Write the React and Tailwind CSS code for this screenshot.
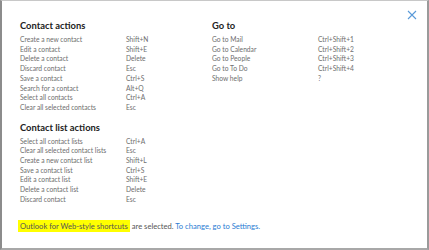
const contactActions = [
  ['Create a new contact', 'Shift+N'],
  ['Edit a contact', 'Shift+E'],
  ['Delete a contact', 'Delete'],
  ['Discard contact', 'Esc'],
  ['Save a contact', 'Ctrl+S'],
  ['Search for a contact', 'Alt+Q'],
  ['Select all contacts', 'Ctrl+A'],
  ['Clear all selected contacts', 'Esc'],
];

const goTo = [
  ['Go to Mail', 'Ctrl+Shift+1'],
  ['Go to Calendar', 'Ctrl+Shift+2'],
  ['Go to People', 'Ctrl+Shift+3'],
  ['Go to To Do', 'Ctrl+Shift+4'],
  ['Show help', '?'],
];

const listActions = [
  ['Select all contact lists', 'Ctrl+A'],
  ['Clear all selected contact lists', 'Esc'],
  ['Create a new contact list', 'Shift+L'],
  ['Save a contact list', 'Ctrl+S'],
  ['Edit a contact list', 'Shift+E'],
  ['Delete a contact list', 'Delete'],
  ['Discard contact', 'Esc'],
];

function Section({ title, rows, className = '' }) {
  return (
    <div className={className}>
      <h2 className="text-[9.4px] leading-[14px] font-bold text-[#222]">{title}</h2>
      <div className="mt-[2px]">
        {rows.map(([label, keys]) => (
          <div key={label} className="flex text-[6.7px] leading-[9.7px] text-[#6e6e6e]">
            <span className="w-[106px] shrink-0 whitespace-nowrap">{label}</span>
            <span className="whitespace-nowrap">{keys}</span>
          </div>
        ))}
      </div>
    </div>
  );
}

export default function App() {
  return (
    <div
      className="relative w-[429px] h-[250px] bg-white border-t border-t-[#c8c8c8] border-l-2 border-l-[#8c8c8c] border-r-2 border-r-[#9a9a9a] border-b-2 border-b-[#a8a8a8] overflow-hidden"
      style={{ fontFamily: 'Lato, "Noto Sans", sans-serif' }}
    >
      <button className="absolute right-[10px] top-[9px] text-[#5a9ad8]">
        <svg width="10" height="10" viewBox="0 0 10 10" fill="none" stroke="currentColor" strokeWidth="1.1">
          <path d="M1 1 L9 9 M9 1 L1 9" />
        </svg>
      </button>

      <div className="pl-[18px] pt-[18px]">
        <div className="flex">
          <Section title="Contact actions" rows={contactActions} className="w-[192px]" />
          <Section title="Go to" rows={goTo} />
        </div>
        <Section title="Contact list actions" rows={listActions} className="mt-[8px]" />

        <p className="mt-[15px] text-[7.6px] leading-[12px] text-[#555] whitespace-nowrap">
          <span className="bg-[#ffff00] px-[2px] -ml-[2px] py-[1px]">Outlook for Web-style shortcuts</span> are selected.{' '}
          <span className="text-[#2b7cd3]">To change, go to Settings.</span>
        </p>
      </div>
    </div>
  );
}
